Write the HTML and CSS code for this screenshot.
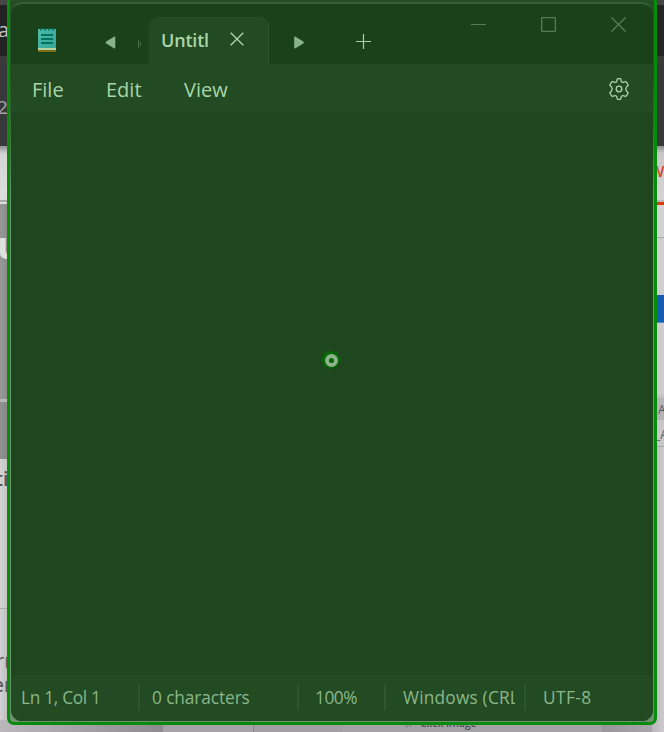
FILE: index.html
```html
<!DOCTYPE html>
<html lang="en">
<head>
<meta charset="utf-8">
<title>Untitled - Notepad</title>
<link rel="stylesheet" href="styles.css">
</head>
<body>
<div class="desktop">
  <div class="side left">
    <div class="l-top"></div>
    <div class="l-bar"><span class="bg-a">a</span></div>
    <div class="l-address"><span class="bg-2">2</span></div>
    <div class="l-page"></div>
    <div class="l-photo"><span class="bg-u">u</span></div>
    <div class="l-photo-low"></div>
    <div class="l-text"><span class="bg-ti">ti</span></div>
    <div class="l-foot"><span class="bg-rr">rr</span><span class="bg-er">er</span></div>
  </div>
  <div class="side right">
    <div class="r-top"></div>
    <div class="r-bar"></div>
    <div class="r-address"></div>
    <div class="r-tab"><span class="bg-w">w</span></div>
    <div class="r-head"></div>
    <div class="r-gap"></div>
    <div class="r-blue"></div>
    <div class="r-space"></div>
    <div class="r-label">A</div>
    <div class="r-label2">_A</div>
    <div class="r-rest"></div>
  </div>
  <div class="under"><div class="u-a"></div><div class="u-b"></div><div class="u-c"></div><div class="u-d"><span class="bg-click"><svg width="16" height="12" viewBox="0 0 16 12"><circle cx="8" cy="5" r="4.500" fill="none" stroke="#8b858c" stroke-width="2" stroke-dasharray="2 1.500"/></svg>Click Image</span></div><div class="u-e"></div></div>
</div>
<div class="frame">
  <div class="window">
    <header class="titlebar">
      <svg class="app-icon" width="18" height="24" viewBox="0 0 18 24">
        <defs><linearGradient id="pad" x2="1" y2="1"><stop offset="0" stop-color="#4cbca6"/><stop offset="1" stop-color="#35a798"/></linearGradient></defs>
        <path d="M0 1h18v19H0z" fill="url(#pad)"/><path d="M0 20h18v2H0z" fill="#b4d3a0"/><path d="M0 22h18v2H0z" fill="#7b6b15"/>
        <path d="M3 0v2.500M7 0v2.500M11 0v2.500M15 0v2.500" stroke="#06695b" stroke-width="1.700"/>
        <path d="M3 7h12M3 11h12M3 15h12" stroke="#07705f" stroke-width="1.800"/>
      </svg>
      <div class="scroll prev"><svg width="11" height="13" viewBox="0 0 11 13"><path d="M9 .8Q10.300 0 10.300 1.500v10q0 1.500-1.300.7L1.200 7.500q-1.200-1 0-2z" fill="#87b488"/></svg></div>
      <div class="sliver"><svg width="4" height="8" viewBox="0 0 4 8"><path d="M.5 0v8M2.500 1.500v4" stroke="#477048" fill="none"/></svg></div>
      <div class="tab"><span class="tab-name">Untitl</span><svg class="tab-close" width="14" height="14" viewBox="0 0 14 14"><path d="M.7.7l12.600 12.600M13.300.7L.7 13.300" stroke="#addaad" stroke-width="1.300"/></svg></div>
      <div class="scroll next"><svg width="11" height="13" viewBox="0 0 11 13"><path d="M1.500.8Q.2 0 .2 1.500v10q0 1.500 1.300.7l7.800-4.700q1.200-1 0-2z" fill="#87b488"/></svg></div>
      <div class="add"><svg width="15" height="15" viewBox="0 0 15 15"><path d="M7.500 0v15M0 7.500h15" stroke="#a6d2a6" stroke-width="1.200"/></svg></div>
      <div class="controls">
        <svg width="15" height="15" viewBox="0 0 15 15"><path d="M0 7.500h15" stroke="#52814f"/></svg>
        <svg width="15" height="15" viewBox="0 0 15 15"><rect x=".6" y=".6" width="13.800" height="13.800" rx="1" fill="none" stroke="#52814f" stroke-width="1.300"/></svg>
        <svg width="15" height="15" viewBox="0 0 15 15"><path d="M.3.3l14.400 14.400M14.700.3L.3 14.700" stroke="#52814f" stroke-width="1.300"/></svg>
      </div>
    </header>
    <nav class="menu">
      <span class="m-file">File</span><span class="m-edit">Edit</span><span class="m-view">View</span>
      <svg class="gear" width="22" height="22" viewBox="0 0 22 22" fill="none" stroke="#a9d5a8" stroke-width="1.300" stroke-linejoin="round"><path d="M9.300.8Q11 .4 12.700.8L13.200 3.200Q13.700 4.500 15.200 4.300L17.700 3.500Q19.300 5 20.200 7.300L18.500 9Q17.300 11 18.500 13L20.200 14.700Q19.300 17 17.700 18.500L15.200 17.700Q13.700 17.500 13.200 18.800L12.700 21.200Q11 21.600 9.300 21.200L8.800 18.800Q8.300 17.500 6.800 17.700L4.300 18.500Q2.700 17 1.800 14.700L3.500 13Q4.700 11 3.500 9L1.800 7.300Q2.700 5 4.300 3.500L6.800 4.300Q8.300 4.500 8.800 3.200z"/><circle cx="11" cy="11" r="2.800"/></svg>
    </nav>
    <main class="editor"></main>
    <footer class="status">
      <span class="s-pos">Ln 1, Col 1</span><span class="s-chars">0 characters</span><span class="s-zoom">100%</span><span class="s-eol"><b>Windows (CRLF)</b></span><span class="s-enc">UTF-8</span>
    </footer>
  </div>
</div>
<svg class="marker" width="20" height="20" viewBox="0 0 20 20"><path d="M10 0l2.500 2.500h3.500l1.500 4L20 10l-2.500 3.500-1.500 3.500h-3.500L10 20l-2.500-3H4l-1.500-3.500L0 10l2.500-3.500L4 2.500h3.500z" fill="#056a06"/><circle cx="10.500" cy="10.500" r="4.500" fill="none" stroke="#90b38e" stroke-width="3.800"/></svg>
</body>
</html>
```
FILE: styles.css
```css
* { box-sizing: border-box; }
body {
  margin: 0;
  width: 664px;
  height: 732px;
  overflow: hidden;
  position: relative;
  font-family: "Open Sans", "Noto Sans", sans-serif;
}
svg { display: block; flex: none; }
.desktop {
  width: 664px;
  height: 732px;
  display: grid;
  grid-template-columns: 12px 1fr 12px;
  grid-template-rows: 720px 12px;
  background: #b5b3b5;
}
.side { display: flex; flex-direction: column; overflow: hidden; white-space: nowrap; }
.side > div { flex: none; overflow: hidden; }
.right { grid-column: 3; grid-row: 1 / 3; color: #55555a; }
.under { grid-column: 1 / 3; display: flex; overflow: hidden; }
.side span { display: block; }

.l-top { height: 5px; background: #484748; }
.l-bar { height: 51px; background: #242324; color: #c5c3c5; }
.bg-a { font-size: 20px; line-height: 24px; margin: 13px 0 0 -2px; }
.l-address { height: 90px; background: #383739; border-top: 9px solid #3b3b3c; color: #a9a7aa; }
.bg-2 { font-size: 19px; line-height: 24px; margin: 30px 0 0 -3px; }
.l-page { height: 58px; background: linear-gradient(#929092, #d7d6d7 8px, #dedddd 54px, #aaa 54px, #aaa 56px, #ddd 56px); }
.l-photo { height: 195px; background: linear-gradient(90deg, #999899, #838384); color: #e2e0db; }
.bg-u { font-size: 38px; font-weight: 700; line-height: 40px; margin: 20px 0 0 -3px; }
.l-photo-low { height: 60px; background: linear-gradient(90deg, #929192, #818082); border-top: 3px solid #b7b6b8; }
.l-text { height: 150px; background: linear-gradient(90deg, #d5d3d4, #bbb); color: #565557; border-bottom: 1px solid #aaa; }
.bg-ti { font-size: 20px; font-weight: 600; line-height: 24px; margin: 8px 0 0 -5px; }
.l-foot { height: 123px; background: linear-gradient(90deg, #d2d0d2, #b5b3b5); color: #5e5c5f; }
.bg-rr { font-size: 20px; line-height: 24px; margin: 40px 0 0 -4px; }
.bg-er { font-size: 19px; font-weight: 600; line-height: 24px; margin: 0 0 0 -7px; }

.r-top { height: 5px; background: #464546; }
.r-bar { height: 51px; background: #242325; }
.r-address { height: 90px; background: #373638; border-top: 9px solid #3c3b3c; }
.r-tab { height: 58px; background: linear-gradient(#8d8b8d, #c8c6c8 7px, #d6d4d6 54px, #b9b7b9 54px); color: #d93b20; }
.bg-w { font-size: 20px; line-height: 24px; margin: 12px 0 0 -3px; }
.r-head { height: 36px; border-top: 3px solid #da3a12; border-bottom: 1px solid #aaa9aa; background: #d2d1d3; margin-top: -2px; }
.r-gap { height: 57px; background: #d0ced0; }
.r-blue { height: 28px; background: #155cb3; border-bottom: 1px solid #5489bb; }
.r-space { height: 75px; background: #cecccf; border-bottom: 3px solid #c4c2c5; }
.r-label { height: 22px; background: #b5b3b7; font-size: 12px; line-height: 24px; padding-left: 6px; }
.r-label2 { height: 27px; background: #c8c6ca; font-size: 12px; line-height: 30px; padding-left: 3px; border-bottom: 1px solid #a7a5a8; }
.r-rest { height: 285px; background: linear-gradient(90deg, #b9b7b9, #cccacd); }

.u-a { width: 163px; background: linear-gradient(90deg, #b9b7b9, #8e8b8e); }
.u-b { width: 91px; background: #a6a2a6; border-right: 1px solid #868387; }
.u-c { width: 88px; background: #a29fa3; }
.u-d { width: 260px; background: #a5a2a6; }
.u-e { width: 50px; background: linear-gradient(90deg, #999699, #a9a6aa); }
.bg-click {
  display: flex;
  gap: 4px;
  margin: -3px 0 0 58px;
  font-size: 10.3px;
  font-weight: 600;
  line-height: 12px;
  color: #4e4a50;
}

.frame {
  position: absolute;
  left: 7px;
  top: -5px;
  width: 650px;
  height: 730px;
  border: 3px solid #058c0b;
  border-radius: 7px;
  background: linear-gradient(#254e26 0, #254e26 75px, #4a7049 145px, #709070 200px, #709070);
  padding: 4px 1px 1px;
}
.window {
  width: 642px;
  height: 719px;
  border-radius: 11px;
  background: #1f471f;
  overflow: hidden;
  color: #a9d6a8;
}
.titlebar {
  height: 62px;
  display: flex;
  background: #19411a;
  border-top: 2px solid #36603a;
  border-radius: 11px 11px 0 0;
}
.app-icon { margin: 24px 0 0 27px; }
.prev { width: 82px; padding: 32px 0 0 49px; }
.sliver { width: 11px; padding: 36px 0 0; }
.tab {
  width: 120px;
  height: 47px;
  margin-top: 13px;
  border-radius: 9px 9px 0 0;
  background: #224a23;
  display: flex;
  padding-left: 12px;
  box-shadow: inset -1px 0 0 #2a512a;
}
.tab-name { width: 47px; margin-right: 22px; overflow: hidden; font-size: 18px; font-weight: 600; line-height: 47px; white-space: nowrap; letter-spacing: -0.2px; }
.tab-close { margin-top: 15px; }
.next { width: 87px; padding: 32px 0 0 25px; }
.add { padding-top: 30px; }
.controls { display: flex; gap: 55px; margin: 13px 0 0 100px; }
.menu { height: 48px; display: flex; background: #224a23; font-size: 20px; line-height: 52px; padding-left: 21px; }
.m-file { width: 74px; }
.m-edit { width: 78px; }
.m-view { width: 424px; }
.gear { margin-top: 14px; }
.editor { height: 563px; background: #1f471f; }
.status { height: 46px; display: flex; background: #224a23; font-size: 17.3px; line-height: 46px; padding-left: 10px; color: #8bb78a; white-space: nowrap; }
.status span { background: linear-gradient(#2d572f, #2d572f) right 10px / 2px 25px no-repeat; }
.s-pos { width: 119px; letter-spacing: -0.3px; }
.s-chars { width: 159px; padding-left: 12px; letter-spacing: -0.1px; }
.s-zoom { width: 87px; padding-left: 16px; letter-spacing: -0.5px; }
.s-eol { width: 140px; padding-left: 17px; }
.s-eol b { display: block; width: 112px; overflow: hidden; font-weight: 400; letter-spacing: 0.2px; }
.status .s-enc { padding-left: 17px; background: none; letter-spacing: 0.4px; }
.marker { position: absolute; left: 321px; top: 350px; }
```
